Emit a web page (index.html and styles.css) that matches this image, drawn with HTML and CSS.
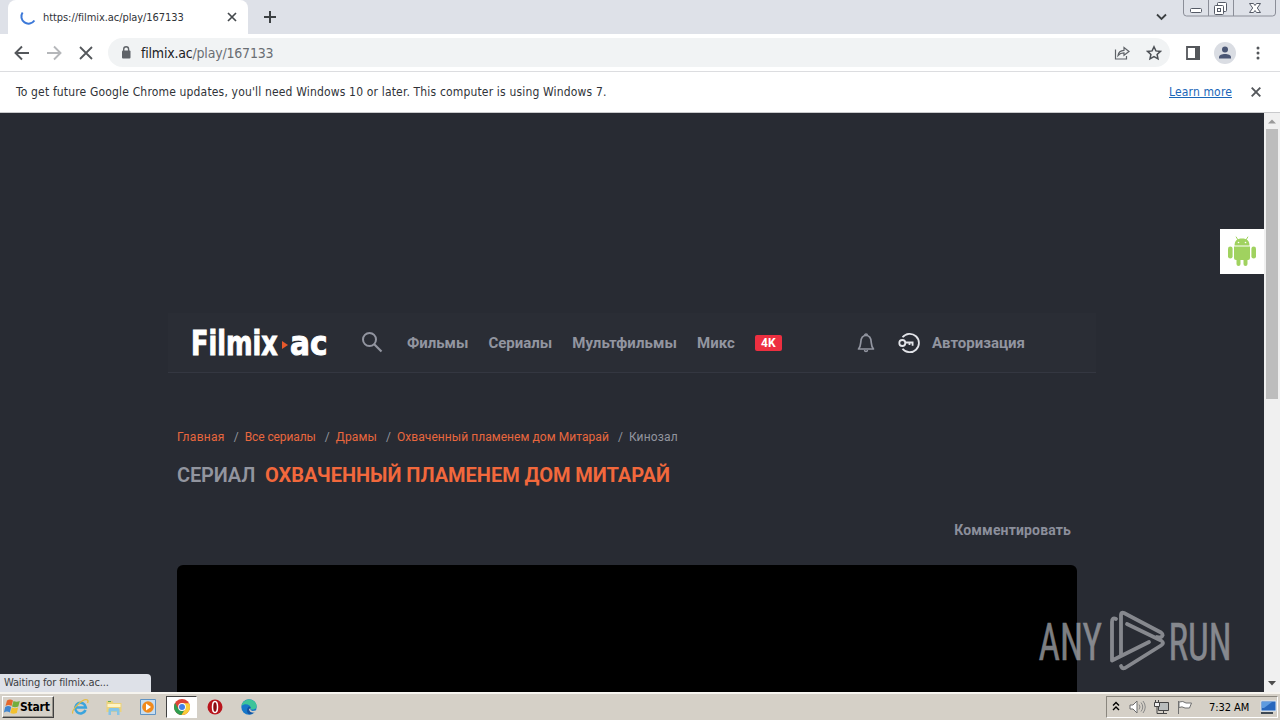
FILE: index.html
```html
<!DOCTYPE html>
<html lang="ru">
<head>
    <meta charset="UTF-8">
    <meta name="viewport" content="width=device-width, initial-scale=1.0">
    <title>Filmix</title>
    <link rel="stylesheet" href="styles.css">
</head>
<body>
    <div class="tab-strip">
        <div class="tab">
            <svg class="spinner" width="18" height="18" viewBox="0 0 18 18"><path d="M3.600 4.500A7 7 0 0 0 15.400 12.500" fill="none" stroke="#3b78d8" stroke-width="2"/></svg>
            <span class="tab-title">https://filmix.ac/play/167133</span>
            <svg width="10" height="10" viewBox="0 0 10 10"><path d="M1 1l8 8M9 1l-8 8" stroke="#45494d" stroke-width="1.7"/></svg>
        </div>
        <svg class="new-tab" width="12" height="12" viewBox="0 0 12 12"><path d="M6 0v12M0 6h12" stroke="#3c4043" stroke-width="2"/></svg>
        <svg class="tab-search" width="11" height="8" viewBox="0 0 11 8"><path d="M1 1.5l4.5 4.5L10 1.5" fill="none" stroke="#3c4043" stroke-width="1.8"/></svg>
        <svg class="window-buttons" width="93" height="18" viewBox="0 0 93 18">
            <path d="M.5 0v13q0 3 3 3h86q3 0 3-3V0M25.500 0v16M50.500 0v16" fill="none" stroke="#8b8e98"/>
            <g fill="#fff" stroke="#555a66">
                <rect x="7.500" y="8.500" width="11" height="4" rx="1"/>
                <rect x="34.500" y="2.500" width="9" height="9" rx="1"/>
                <rect x="31.500" y="5.500" width="9" height="9" rx="1"/>
                <rect x="34.500" y="8.500" width="3" height="3"/>
                <path d="M66.500 3.500h4l1.500 2 1.500-2h4l-3.200 4.500 3.200 4.500h-4l-1.500-2-1.500 2h-4l3.200-4.500z"/>
            </g>
        </svg>
    </div>

    <div class="toolbar">
        <svg width="16" height="16" viewBox="0 0 16 16"><path d="M15 8H2M8 1.500L1.500 8 8 14.500" fill="none" stroke="#54575b" stroke-width="1.900"/></svg>
        <svg width="16" height="16" viewBox="0 0 16 16"><path d="M1 8h13M8 1.500L14.500 8 8 14.500" fill="none" stroke="#b5b7ba" stroke-width="1.900"/></svg>
        <svg width="16" height="16" viewBox="0 0 16 16"><path d="M2 2l12 12M14 2L2 14" stroke="#54575b" stroke-width="1.800"/></svg>
        <div class="address-bar">
            <svg width="10" height="13" viewBox="0 0 10 13"><rect x="1" y="4.500" width="8.500" height="8" rx="1" fill="#5f6368"/><path d="M2.700 5V3.200a2.400 2.400 0 0 1 4.900 0V5" fill="none" stroke="#5f6368" stroke-width="1.400"/></svg>
            <span class="url"><span class="host">filmix.ac</span>/play/167133</span>
            <svg class="share" width="16" height="16" viewBox="0 0 16 16"><path d="M1.500 4.500v9.500h11v-3M4 10.500c.5-3.500 2.500-5 6-5.200V2.500L15 6.500 10 10.200V7.800C7.500 7.800 5.500 8.700 4 10.500z" fill="none" stroke="#5f6368" stroke-width="1.200"/></svg>
            <svg width="16" height="16" viewBox="0 0 16 16"><path d="M8 1.800l1.900 4.100 4.500.5-3.300 3 .9 4.400-4-2.200-4 2.200.9-4.400-3.300-3 4.500-.5z" fill="none" stroke="#4d5156" stroke-width="1.500"/></svg>
        </div>
        <svg class="side-panel" width="14" height="14" viewBox="0 0 14 14"><path d="M1 1h12v12H1z" fill="none" stroke="#54575b" stroke-width="1.800"/><path d="M9 0h5v14H9z" fill="#54575b"/></svg>
        <svg class="profile" width="22" height="22" viewBox="0 0 22 22"><circle cx="11" cy="11" r="11" fill="#dadde3"/><circle cx="11" cy="7.500" r="3" fill="#4a5674"/><path d="M5 16.500v-1.200c0-2.300 3-3.300 6-3.300s6 1 6 3.300v1.200z" fill="#4a5674"/></svg>
        <svg class="menu-dots" width="4" height="14" viewBox="0 0 4 14"><g fill="#54575b"><circle cx="2" cy="2" r="1.500"/><circle cx="2" cy="7" r="1.500"/><circle cx="2" cy="12" r="1.500"/></g></svg>
    </div>

    <div class="infobar">
        <span class="info-text">To get future Google Chrome updates, you'll need Windows 10 or later. This computer is using Windows 7.</span>
        <a class="learn-more">Learn more</a>
        <svg width="10" height="10" viewBox="0 0 10 10"><path d="M.7.700l8.600 8.600M9.300.700L.7 9.300" stroke="#54575b" stroke-width="1.900"/></svg>
    </div>

    <div class="viewport">
        <div class="page">
            <header class="header">
                <svg class="logo" width="140" height="56" viewBox="0 0 140 56">
                    <text class="logo-text" transform="translate(0 40) scale(.75 1)">Filmix</text>
                    <path d="M91 26l6 4-6 4z" fill="#e8592b"/>
                    <text class="logo-text" transform="translate(99 40) scale(.87 1)">ac</text>
                </svg>
                <svg class="search" width="22" height="22" viewBox="0 0 22 22"><circle cx="8.500" cy="7.500" r="6.500" fill="none" stroke="#9295a0" stroke-width="2"/><path d="M13 12l7.500 7.500" stroke="#9295a0" stroke-width="2.200"/></svg>
                <nav class="nav">
                    <a>Фильмы</a>
                    <a>Сериалы</a>
                    <a class="nav-cartoons">Мультфильмы</a>
                    <a>Микс</a>
                    <span class="badge-4k">4K</span>
                </nav>
                <svg class="bell" width="18" height="20" viewBox="0 0 18 20"><path d="M1.500 16c2-2 2-3.500 2.300-7C4 5 6 2.500 9 2.500S14 5 14.200 9c.3 3.500.3 5 2.300 7z" fill="none" stroke="#9295a0" stroke-width="1.700" stroke-linejoin="round"/><path d="M7.500 2.500a1.500 1.500 0 0 1 3 0M7.500 17a1.500 1.500 0 0 0 3 0" fill="none" stroke="#9295a0" stroke-width="1.400"/></svg>
                <svg class="key" width="22" height="22" viewBox="0 0 22 22"><g fill="none" stroke="#e2e3e8" stroke-width="1.800"><path d="M4.500 5.300a9.200 9.200 0 1 1 0 11.400"/><circle cx="4.300" cy="11" r="3"/><path d="M7.300 10.500H15.500M11.500 10.500v2.500M14.600 10.500v3.200"/></g></svg>
                <a class="login">Авторизация</a>
            </header>

            <main class="content">
                <div class="breadcrumbs">
                    <a class="bc-home">Главная</a><i>/</i>
                    <a class="bc-all">Все сериалы</a><i>/</i>
                    <a class="bc-drama">Драмы</a><i>/</i>
                    <a class="bc-title">Охваченный пламенем дом Митарай</a><i>/</i>
                    <span class="bc-room">Кинозал</span>
                </div>
                <h1 class="title"><span class="title-type">СЕРИАЛ</span><span class="title-name">ОХВАЧЕННЫЙ ПЛАМЕНЕМ ДОМ МИТАРАЙ</span></h1>
                <div class="actions"><a>Комментировать</a></div>
                <div class="player"></div>
            </main>

            <div class="android">
                <svg width="28" height="32" viewBox="0 0 28 32">
                    <g fill="#a0d25f">
                        <path d="M6.500 9.500C6.500 5 9 2.500 14 2.500S21.500 5 21.500 9.500z"/>
                        <path d="M6 10.500h16V22q0 2-2 2H8q-2 0-2-2z"/>
                        <rect x="0" y="10.500" width="4.600" height="12" rx="2.300"/>
                        <rect x="23.400" y="10.500" width="4.600" height="12" rx="2.300"/>
                        <rect x="8.500" y="19" width="4" height="11" rx="2"/>
                        <rect x="15.500" y="19" width="4" height="11" rx="2"/>
                    </g>
                    <path d="M10 4L8 .7M18 4L20 .7" stroke="#a0d25f"/>
                    <circle cx="10.500" cy="6.500" r=".8" fill="#fff"/><circle cx="17.500" cy="6.500" r=".8" fill="#fff"/>
                </svg>
            </div>

            <div class="status">Waiting for filmix.ac...</div>
        </div>

        <div class="scrollbar">
            <svg width="16" height="16" viewBox="0 0 16 16"><path d="M4 10.500h8L8 6.500z" fill="#9a9a9a"/></svg>
            <div class="thumb"></div>
            <svg class="scroll-down" width="16" height="16" viewBox="0 0 16 16"><path d="M4 5h8l-4 4.500z" fill="#4c4c4c"/></svg>
        </div>

        <svg class="watermark" width="210" height="76" viewBox="0 0 210 76">
            <text class="watermark-text" transform="translate(1.500 52) scale(.715 1)">ANY</text>
            <g fill="none" stroke="#a6a8ad" stroke-width="3.800" stroke-linejoin="round" stroke-linecap="round">
                <path d="M79 11q-4-2-4 3V52.500l37-18.500"/>
                <path d="M84 47V7q0-3.500 3-2L124 24.500q4 3-1 5l-3-.5"/>
                <path d="M90 16l34 16.500q4 2.500 0 5L88 60q-3 1-4-2"/>
            </g>
            <text class="watermark-text" transform="translate(131.500 52) scale(.71 1)">RUN</text>
        </svg>
    </div>

    <div class="taskbar">
        <div class="start">
            <svg width="16" height="16" viewBox="0 0 16 16"><path d="M3 1.500q3-2 6 0L7.500 7q-3-2-6 0z" fill="#e5682c"/><path d="M9.500 2q3 1.500 6.300 0L14.300 7.500q-3.300 1.500-6.300 0z" fill="#73ad3d"/><path d="M1.200 8q3-2 6 0l-1.300 5.500q-3-2-6 0z" fill="#4186cf"/><path d="M7.800 8.500q3 1.500 6.300 0L12.800 14q-3.500 1.500-6.500 0z" fill="#f2c02e"/></svg>
            <b>Start</b>
        </div>
        <div class="quick">
            <svg width="18" height="18" viewBox="0 0 18 18"><path d="M14.500 12A5.300 5.300 0 1 1 14.800 9.500H5" fill="none" stroke="#3ba4dd" stroke-width="2.600"/><path d="M2 15.500C-.5 13 12-.5 16.500 2q1 1 0 3" fill="none" stroke="#e5bd45" stroke-width="1.300"/></svg>
        </div>
        <div class="quick">
            <svg width="18" height="18" viewBox="0 0 18 18"><path d="M1.500 3h6l1 2h8v9h-15z" fill="#ecd27a"/><path d="M2.500 6h13v3h-13z" fill="#fff4c4"/><path d="M3.500 17v-5.500q0-1.500 1.500-1.500h8q1.500 0 1.500 1.500V17H12v-3.500H6V17z" fill="#84c4e8"/><path d="M3 3h3v1H3z" fill="#65ab54"/></svg>
        </div>
        <div class="quick">
            <svg width="18" height="18" viewBox="0 0 18 18"><path d="M1.500 1.500h15v15h-15z" fill="#c7ddf0" stroke="#5f93c4"/><circle cx="9" cy="9" r="5.800" fill="#f18a1c"/><path d="M7 5.500L12 9l-5 3.500z" fill="#fff"/></svg>
        </div>
        <div class="quick active">
            <svg width="16" height="16" viewBox="0 0 16 16"><circle cx="8" cy="8" r="8" fill="#dd4437"/><path d="M1.100 4A8 8 0 0 0 7.500 16L11.500 9.500 8 11.500 4.500 10z" fill="#2f9e50"/><path d="M15 4.200H8l3.500 5.300L7.500 16A8 8 0 0 0 15 4.200z" fill="#f9cd38"/><circle cx="8" cy="8" r="3.900" fill="#fff"/><circle cx="8" cy="8" r="3" fill="#4280e8"/></svg>
        </div>
        <div class="quick">
            <svg width="16" height="16" viewBox="0 0 16 16"><circle cx="8" cy="8" r="7.500" fill="#b9151d"/><ellipse cx="8" cy="8" rx="2.500" ry="5.500" fill="#8b0c13" stroke="#fff" stroke-width="1.500"/></svg>
        </div>
        <div class="quick">
            <svg width="16" height="16" viewBox="0 0 16 16"><circle cx="8" cy="8" r="7.700" fill="#1677c9"/><path d="M.5 7C1.500-1 14-2 15.600 6.500c.3 3-2 4.500-5.500 4L9.500 9C10.500 6 4 3.500.5 7z" fill="#3dc49a"/><path d="M9.500 9c-1 3 2.500 4.500 5.500 2.800q-3 4-6.500 3.500C5 14 5.500 9 8 7.500q2 0 1.500 1.500z" fill="#1353a2"/><path d="M9.500 9q-1 2 2 3l3.500-.5.5 1.500-1 .7q-6 .5-6.500-3.500z" fill="#d5d0c7"/></svg>
        </div>
        <div class="tray">
            <svg width="8" height="12" viewBox="0 0 8 12"><path d="M1 4.500l3-3 3 3M1 9l3-3 3 3" fill="none" stroke="#000" stroke-width="1.400"/></svg>
            <svg class="volume" width="17" height="14" viewBox="0 0 17 14"><path d="M1 5h3l4-4v12L4 9H1z" fill="#fff" stroke="#6c6c6c"/><path d="M10 4.500q2 2.500 0 5M12 2.500q3.500 4.500 0 9M14 1q4.500 6 0 12" fill="none" stroke="#888"/></svg>
            <svg class="network" width="17" height="16" viewBox="0 0 17 16"><path d="M5.500 3.500h10v8h-10z" fill="#b9bdbd" stroke="#444"/><path d="M7 14.500h7M10.500 12v2M4 7.500v7h3" fill="none" stroke="#444"/><path d="M1.500 3.500h5v4h-5zM2.500 3V1M5.500 3V1" fill="#eee" stroke="#444"/></svg>
            <svg class="flag" width="16" height="15" viewBox="0 0 16 15"><path d="M1.500 14V1M2 2q4-1.500 7 1h5.500l-2 5H8Q5 6 2 7.500z" fill="#fff" stroke="#707070"/></svg>
            <span class="clock">7:32 AM</span>
            <svg class="desktop" width="17" height="14" viewBox="0 0 17 14"><path d="M1 1h15v10H1z" fill="#2767bd" stroke="#d8e6f4"/><path d="M2 2h10L4 8H2z" fill="#5d9be0"/><path d="M1 12h12v2H1z" fill="#3f4953"/></svg>
        </div>
    </div>
</body>
</html>
```

FILE: styles.css
```css
/* General Styles */
* {
    box-sizing: border-box;
}

body {
    margin: 0;
    width: 1280px;
    height: 720px;
    overflow: hidden;
    display: flex;
    flex-direction: column;
    font-family: "DejaVu Sans Condensed", "DejaVu Sans", sans-serif;
    font-stretch: condensed;
    color: #303338;
}

svg {
    display: block;
    flex: none;
}

span, a {
    white-space: nowrap;
}

/* Tabs */
.tab-strip {
    height: 34px;
    background: #dee1e8;
    display: flex;
    align-items: flex-start;
    padding-left: 8px;
}

.tab {
    width: 240px;
    height: 34px;
    background: #fff;
    border-radius: 8px 8px 0 0;
    display: flex;
    align-items: center;
    padding: 0 11px;
}

.spinner {
    margin-right: 6px;
}

.tab-title {
    flex: 1;
    font-size: 11px;
    letter-spacing: -0.07px;
}

.new-tab {
    margin: 11px 0 0 16px;
}

.tab-search {
    margin: 13px 16px 0 auto;
}

.window-buttons {
    margin-right: 4px;
}

/* Toolbar */
.toolbar {
    height: 38px;
    background: #fff;
    border-bottom: 1px solid #dcdde0;
    display: flex;
    align-items: center;
    padding: 0 20px 0 14px;
    gap: 16px;
}

.address-bar {
    width: 1064px;
    height: 29px;
    margin-left: -2px;
    border-radius: 15px;
    background: #f1f3f4;
    display: flex;
    align-items: center;
    padding: 0 8px 0 13px;
}

.url {
    margin-left: 10px;
    font-size: 14px;
    letter-spacing: -0.2px;
    color: #6a6e73;
}

.host {
    color: #202124;
}

.share {
    margin: 0 16px 0 auto;
}

.profile {
    margin-left: -2px;
}

.menu-dots {
    margin-left: 4px;
}

/* Update notice */
.infobar {
    height: 41px;
    background: #fff;
    border-bottom: 1px solid #c9cacc;
    display: flex;
    align-items: center;
    padding: 0 19px 0 16px;
    font-size: 12px;
}

.info-text {
    letter-spacing: 0.165px;
}

.learn-more {
    margin: 0 19px 0 auto;
    letter-spacing: 0.15px;
    color: #1a66b8;
    text-decoration: underline;
}

/* Page */
.viewport {
    height: 579px;
    display: flex;
    position: relative;
}

.page {
    width: 1264px;
    height: 579px;
    background: #282b33;
    position: relative;
    overflow: hidden;
    font-family: Roboto, sans-serif;
    font-stretch: normal;
}

.header {
    width: 928px;
    height: 60px;
    margin: 200px 0 0 168px;
    padding-left: 23px;
    background: #2a2d35;
    border-bottom: 1px solid #343741;
    display: flex;
    align-items: center;
    color: #9295a0;
    font-size: 15px;
    font-weight: 700;
}

.logo-text {
    font-family: "DejaVu Sans", sans-serif;
    font-size: 34px;
    font-weight: 700;
    fill: #fff;
    stroke: #fff;
    stroke-width: 1px;
}

.search {
    margin-left: 30px;
}

.nav {
    display: flex;
    align-items: center;
    gap: 20px;
    margin-left: 24px;
}

.nav-cartoons {
    letter-spacing: 0.1px;
}

.badge-4k {
    width: 27px;
    height: 16px;
    margin-top: 1px;
    border-radius: 2px;
    background: #ed2f40;
    color: #fff;
    font-size: 12px;
    line-height: 16px;
    text-align: center;
}

.bell {
    margin-left: auto;
}

.key {
    margin-left: 23px;
}

.login {
    margin: 0 71px 0 12px;
}

.content {
    width: 900px;
    margin-left: 177px;
    padding-top: 56px;
}

.breadcrumbs {
    display: flex;
    height: 16px;
    font-size: 12px;
    line-height: 16px;
    color: #92959f;
}

.breadcrumbs a {
    color: #e8673e;
}

.breadcrumbs i {
    font-style: normal;
    margin: 0 6px 0 9px;
}

.breadcrumbs .bc-home {
    letter-spacing: 0.3px;
}

.breadcrumbs .bc-all {
    letter-spacing: -0.1px;
}

.breadcrumbs .bc-drama,
.breadcrumbs .bc-room {
    letter-spacing: 0.15px;
}

.breadcrumbs .bc-title {
    letter-spacing: 0.06px;
}

.title {
    margin: 18px 0 0;
    font-size: 20px;
    line-height: 24px;
    font-weight: 700;
    color: #92959f;
    display: flex;
}

.title-type {
    width: 88px;
    font-weight: 600;
    letter-spacing: -0.15px;
}

.title-name {
    color: #f2683c;
    letter-spacing: -0.03px;
}

.actions {
    display: flex;
    justify-content: flex-end;
    margin-top: 34px;
    padding-right: 6px;
    font-size: 14px;
    line-height: 18px;
    font-weight: 700;
    letter-spacing: 0.15px;
    color: #8c8f9c;
}

.player {
    height: 140px;
    margin-top: 26px;
    border-radius: 6px 6px 0 0;
    background: #000;
}

.android {
    position: absolute;
    right: 0;
    top: 116px;
    width: 44px;
    height: 45px;
    background: #fff;
    display: flex;
    align-items: center;
    justify-content: center;
}

.status {
    position: absolute;
    left: 0;
    bottom: 0;
    width: 151px;
    height: 18px;
    padding-left: 4px;
    border-radius: 0 4px 0 0;
    background: #dee1e8;
    color: #3c4043;
    font: 11px/18px "DejaVu Sans Condensed", "DejaVu Sans", sans-serif;
    font-stretch: condensed;
    letter-spacing: -0.15px;
}

.scrollbar {
    width: 16px;
    background: #f0f0f0;
    display: flex;
    flex-direction: column;
}

.thumb {
    width: 12px;
    height: 270px;
    margin-left: 2px;
    background: #bdbdbd;
}

.scroll-down {
    margin-top: auto;
}

.watermark {
    position: absolute;
    left: 1037px;
    top: 495px;
    opacity: 0.75;
}

.watermark-text {
    font-family: Roboto, sans-serif;
    font-size: 52px;
    font-weight: 400;
    fill: #a6a8ad;
    stroke: #a6a8ad;
    stroke-width: 0.5px;
}

/* Taskbar */
.taskbar {
    height: 28px;
    background: #d5d0c7;
    border-top: 2px solid #f6f4ef;
    display: flex;
    align-items: center;
    padding: 1px 2px;
}

.start {
    width: 52px;
    height: 22px;
    margin-right: 9px;
    padding-left: 1px;
    border: 1px solid;
    border-color: #fff #404040 #404040 #fff;
    display: flex;
    align-items: center;
    font-size: 12px;
    letter-spacing: -0.2px;
    color: #000;
    box-shadow: inset -1px -1px 0 #98948c;
}

.quick {
    width: 34px;
    height: 22px;
    display: flex;
    align-items: center;
    justify-content: center;
}

.quick.active {
    width: 31px;
    margin: 0 1px 0 1px;
    background: #fff;
    border: 1px solid;
    border-color: #404040 #fff #fff #404040;
}

.tray {
    width: 172px;
    height: 22px;
    margin-left: auto;
    padding-left: 5px;
    border: 1px solid;
    border-color: #8a867e #fff #fff #8a867e;
    display: flex;
    align-items: center;
    color: #000;
    font-size: 11px;
}

.volume {
    margin-left: 9px;
}

.network {
    margin-left: 7px;
}

.flag {
    margin-left: 7px;
}

.clock {
    margin-left: 16px;
    letter-spacing: -0.05px;
}

.desktop {
    margin-left: auto;
}
```
